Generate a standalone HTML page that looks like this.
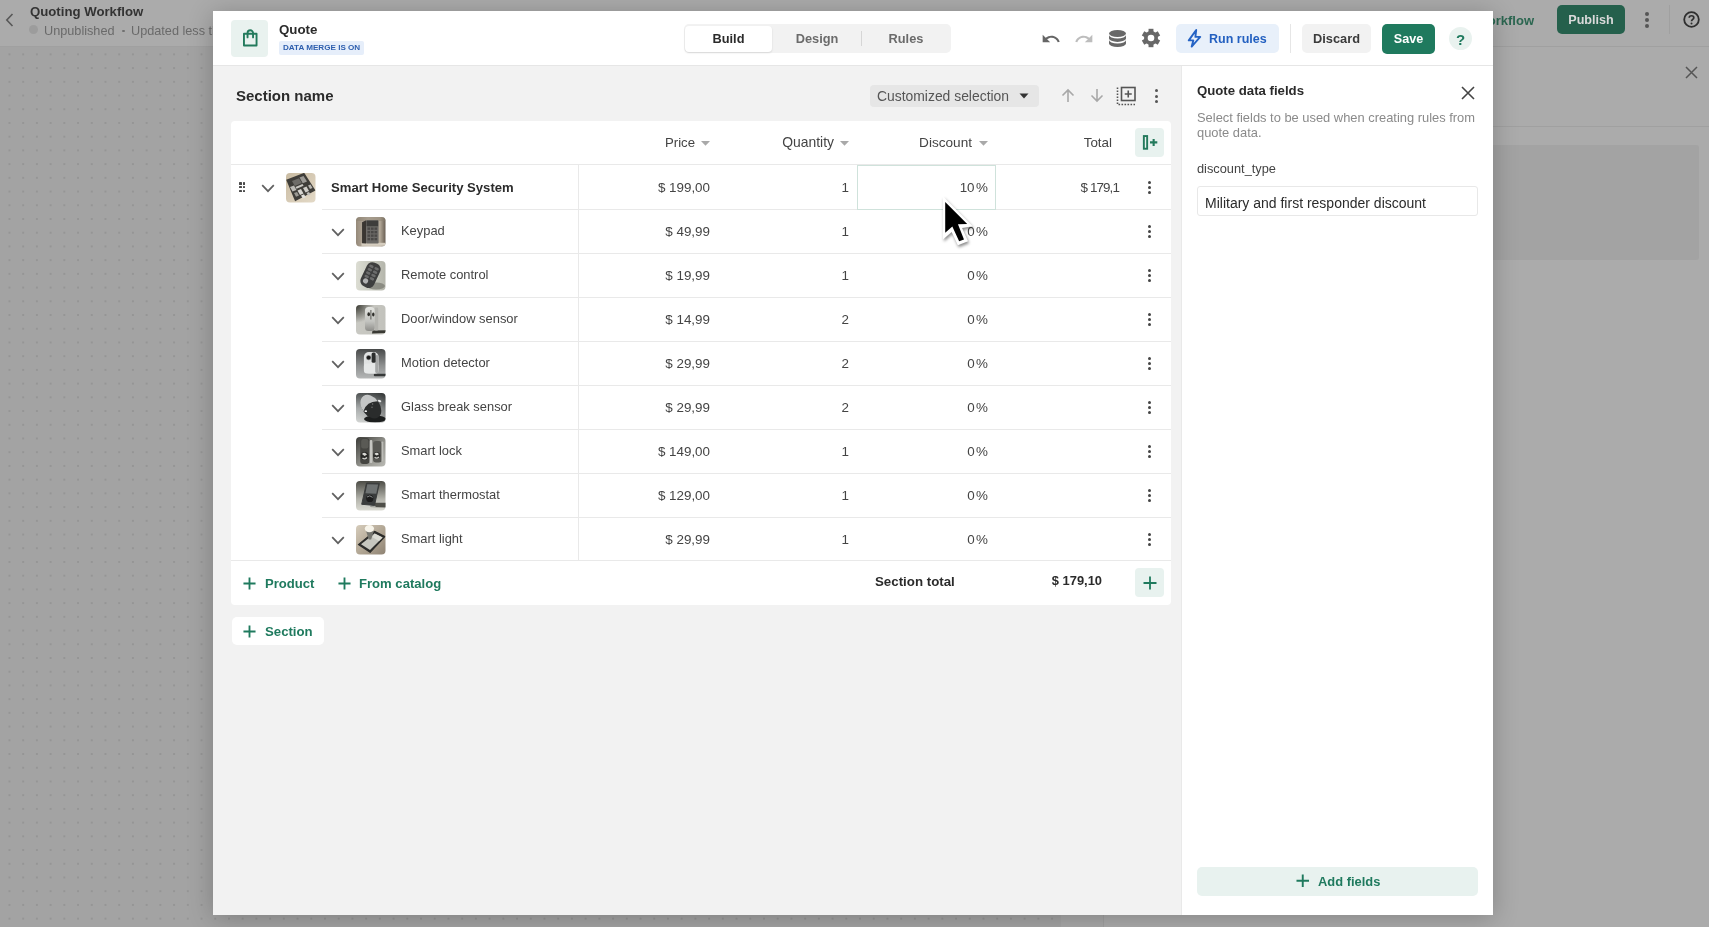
<!DOCTYPE html>
<html><head><meta charset="utf-8">
<style>
*{box-sizing:border-box;margin:0;padding:0}
html,body{width:1709px;height:927px;overflow:hidden}
body{position:relative;font-family:"Liberation Sans",sans-serif;background:#a3a3a3;color:#2b2b2b}
.a{position:absolute}
.t{position:absolute;white-space:nowrap;line-height:1;will-change:transform}
.b{font-weight:700}
/* background app */
#bghead{left:0;top:0;width:1709px;height:47px;background:#ababab;border-bottom:1px solid #a0a0a0}
#canvas{left:0;top:47px;width:1061px;height:880px;background-color:#a3a3a3;
 background-image:radial-gradient(circle at center,#959595 0.8px,rgba(0,0,0,0) 1.2px);
 background-size:13.72px 13.72px;background-position:2.6px 0.5px}
#strip{left:1061px;top:47px;width:43px;height:880px;background:#a8a8a8;border-right:1px solid #a0a0a0}
#rpanel{left:1104px;top:47px;width:605px;height:880px;background:#ababab}
/* modal */
#modal{left:213px;top:11px;width:1280px;height:904px;background:#f2f2f2;box-shadow:0 3px 24px rgba(0,0,0,0.23)}
#mhead{left:0;top:0;width:1280px;height:55px;background:#fff;border-bottom:1px solid #e6e6e6}
.green{color:#1f7a5e}
</style></head><body>
<div id="bghead" class="a"></div>
<div id="canvas" class="a"></div>
<div id="strip" class="a"></div>
<div id="rpanel" class="a"></div>

<!-- background header content -->
<svg class="a" style="left:4px;top:12px" width="12" height="16" viewBox="0 0 12 16"><path d="M8.5 2 L2.8 8 L8.5 14" fill="none" stroke="#585858" stroke-width="1.6"/></svg>
<div class="t b" style="left:30px;top:5px;font-size:13.2px;color:#333">Quoting Workflow</div>
<div class="a" style="left:29px;top:25px;width:9px;height:9px;border-radius:50%;background:#9c9c9c"></div>
<div class="t" style="left:44px;top:24.5px;font-size:12.7px;color:#6a6a6a">Unpublished</div>
<div class="a" style="left:122px;top:29.5px;width:2.8px;height:2.8px;border-radius:50%;background:#707070"></div>
<div class="t" style="left:131px;top:24.5px;font-size:12.7px;color:#6a6a6a">Updated less than a minute ago</div>


<!-- background right header -->
<div class="t b" style="left:1450px;top:13.8px;font-size:13px;color:#2b6650;width:84px;text-align:right">Workflow</div>
<div class="a" style="left:1557px;top:5px;width:68px;height:29px;border-radius:5px;background:#25604c"></div>
<div class="t b" style="left:1557px;top:14.4px;width:68px;text-align:center;font-size:12.6px;color:#dadada">Publish</div>
<div class="a" style="left:1645px;top:12px;width:4px;height:4px;border-radius:50%;background:#555"></div>
<div class="a" style="left:1645px;top:18px;width:4px;height:4px;border-radius:50%;background:#555"></div>
<div class="a" style="left:1645px;top:24px;width:4px;height:4px;border-radius:50%;background:#555"></div>
<div class="a" style="left:1669px;top:5px;width:1px;height:29px;background:#a0a0a0"></div>
<svg class="a" style="left:1683px;top:11px" width="17" height="17" viewBox="0 0 17 17"><circle cx="8.5" cy="8.5" r="7.3" fill="none" stroke="#2e2e2e" stroke-width="1.8"/><path d="M6.2 6.7 C6.2 4.1 10.8 4.1 10.8 6.7 C10.8 8.3 8.5 8.4 8.5 10.2" fill="none" stroke="#2e2e2e" stroke-width="1.7"/><circle cx="8.5" cy="12.6" r="1" fill="#2e2e2e"/></svg>
<!-- right panel behind -->
<svg class="a" style="left:1685px;top:66px" width="13" height="13" viewBox="0 0 13 13"><path d="M1 1 L12 12 M12 1 L1 12" stroke="#555" stroke-width="1.5"/></svg>
<div class="a" style="left:1104px;top:126px;width:605px;height:1px;background:#a0a0a0"></div>
<div class="a" style="left:1120px;top:145px;width:579px;height:115px;border-radius:3px;background:#a3a3a3"></div>

<div id="modal" class="a">
<div id="mhead" class="a"></div>
<!-- modal header content; coords relative to modal (left 213, top 11) -->
<div class="a" style="left:18px;top:9px;width:37px;height:37px;border-radius:4px;background:#e9f2ef"></div>
<svg class="a" style="left:27px;top:15px" width="20" height="24" viewBox="0 0 20 24"><path d="M3.95 7.75 H16.55 V19.55 H3.95 Z" fill="none" stroke="#237a5c" stroke-width="1.9" stroke-linejoin="round"/><path d="M7.55 11.4 V7 A2.75 2.75 0 0 1 13.05 7 V11.4" fill="none" stroke="#237a5c" stroke-width="1.9" stroke-linecap="round"/></svg>
<div class="t b" style="left:66px;top:12px;font-size:13.3px;color:#2b2b2b">Quote</div>
<div class="a" style="left:66px;top:30px;width:85px;height:14px;border-radius:2px;background:#e6eefa"></div>
<div class="t b" style="left:69.5px;top:33px;font-size:8.1px;color:#2d5eae">DATA MERGE IS ON</div>
<!-- tabs -->
<div class="a" style="left:471px;top:13px;width:267px;height:29px;border-radius:5px;background:#f2f2f2"></div>
<div class="a" style="left:472px;top:15px;width:87px;height:26px;border-radius:4px;background:#fff;box-shadow:0 1px 2px rgba(0,0,0,0.12)"></div>
<div class="t b" style="left:472px;top:22px;width:87px;text-align:center;font-size:12.8px;color:#2b2b2b">Build</div>
<div class="t b" style="left:560px;top:22px;width:88px;text-align:center;font-size:12.8px;color:#6b6b6b">Design</div>
<div class="a" style="left:648px;top:20px;width:1px;height:15px;background:#d6d6d6"></div>
<div class="t b" style="left:649px;top:22px;width:88px;text-align:center;font-size:12.8px;color:#6b6b6b">Rules</div>
<!-- icons -->
<svg class="a" style="left:828.3px;top:18.2px" width="20" height="20" viewBox="0 0 24 24"><path fill="#666" d="M12.5 8c-2.65 0-5.05.99-6.9 2.6L2 7v9h9l-3.62-3.62c1.39-1.16 3.16-1.88 5.12-1.88 3.54 0 6.55 2.31 7.6 5.5l2.37-.78C21.08 11.03 17.15 8 12.5 8z"/></svg>
<svg class="a" style="left:861.3px;top:18.2px" width="20" height="20" viewBox="0 0 24 24"><g transform="translate(24 0) scale(-1 1)"><path fill="#bdbdbd" d="M12.5 8c-2.65 0-5.05.99-6.9 2.6L2 7v9h9l-3.62-3.62c1.39-1.16 3.16-1.88 5.12-1.88 3.54 0 6.55 2.31 7.6 5.5l2.37-.78C21.08 11.03 17.15 8 12.5 8z"/></g></svg>
<svg class="a" style="left:895.8px;top:18.7px" width="17" height="18" viewBox="0 0 17 18"><ellipse cx="8.5" cy="3.5" rx="8.5" ry="3.5" fill="#686868"/><path d="M0 5.1 A8.5 3.5 0 0 0 17 5.1 V8.4 A8.5 3.5 0 0 1 0 8.4 Z" fill="#686868"/><path d="M0 10.0 A8.5 3.5 0 0 0 17 10.0 V13.5 A8.5 3.5 0 0 1 0 13.5 Z" fill="#686868"/></svg>
<svg class="a" style="left:927.9px;top:17.4px" width="20" height="20" viewBox="0 0 20 20"><rect x="7.55" y="0.8000000000000007" width="4.9" height="4" transform="rotate(0 10 10)" fill="#686868"/><rect x="7.55" y="0.8000000000000007" width="4.9" height="4" transform="rotate(60 10 10)" fill="#686868"/><rect x="7.55" y="0.8000000000000007" width="4.9" height="4" transform="rotate(120 10 10)" fill="#686868"/><rect x="7.55" y="0.8000000000000007" width="4.9" height="4" transform="rotate(180 10 10)" fill="#686868"/><rect x="7.55" y="0.8000000000000007" width="4.9" height="4" transform="rotate(240 10 10)" fill="#686868"/><rect x="7.55" y="0.8000000000000007" width="4.9" height="4" transform="rotate(300 10 10)" fill="#686868"/><circle cx="10" cy="10" r="7.0" fill="#686868"/><circle cx="10" cy="10" r="3.3" fill="#fff"/></svg>
<div class="a" style="left:963px;top:13px;width:103px;height:29px;border-radius:5px;background:#e8f0fa"></div>
<svg class="a" style="left:972px;top:15px" width="20" height="25" viewBox="0 0 20 25"><path d="M11.2 4 L3.8 14.4 L8.3 14.4 L6.7 20.6 L15.2 10.9 L10.4 10.9 Z" fill="none" stroke="#2563c4" stroke-width="1.9" stroke-linejoin="round"/></svg>
<div class="t b" style="left:996px;top:22px;font-size:12.5px;color:#2360c0">Run rules</div>
<div class="a" style="left:1077px;top:13px;width:1px;height:29px;background:#e6e6e6"></div>
<div class="a" style="left:1089px;top:13px;width:69px;height:29px;border-radius:5px;background:#f2f2f2"></div>
<div class="t b" style="left:1089px;top:22px;width:69px;text-align:center;font-size:12.8px;color:#3b3b3b">Discard</div>
<div class="a" style="left:1169px;top:12.5px;width:53px;height:30px;border-radius:5px;background:#1f7a5e"></div>
<div class="t b" style="left:1169px;top:22px;width:53px;text-align:center;font-size:12.6px;color:#fff">Save</div>
<div class="a" style="left:1236px;top:16px;width:23px;height:23px;border-radius:50%;background:#e9f2ef"></div>
<div class="t b" style="left:1236px;top:21px;width:23px;text-align:center;font-size:15px;color:#1f7a5e">?</div>
<!-- body: right panel -->
<div class="a" style="left:968px;top:55px;width:312px;height:849px;background:#fff;border-left:1px solid #e9e9e9"></div>
</div>

<!-- BODY START -->
<div class="t b" style="left:235.5px;top:88.2px;font-size:15px;color:#2b2b2b">Section name</div>
<div class="a" style="left:870px;top:85px;width:169px;height:21.5px;border-radius:4px;background:#e6e6e6"></div>
<div class="t" style="left:877px;top:90.23px;font-size:13.9px;color:#555">Customized selection</div>
<svg class="a" style="left:1019px;top:93px" width="10" height="6" viewBox="0 0 10 6"><path d="M0.5 0.5 H9.5 L5 5.5 Z" fill="#333"/></svg>
<svg class="a" style="left:1061px;top:88px" width="14" height="15" viewBox="0 0 14 15"><path d="M7 14 V2.5 M1.5 7.5 L7 2 L12.5 7.5" fill="none" stroke="#a8a8a8" stroke-width="1.6"/></svg>
<svg class="a" style="left:1090px;top:88px" width="14" height="15" viewBox="0 0 14 15"><path d="M7 1 V12.5 M1.5 7.5 L7 13 L12.5 7.5" fill="none" stroke="#a8a8a8" stroke-width="1.6"/></svg>
<svg class="a" style="left:1116px;top:86px" width="21" height="20" viewBox="0 0 21 20"><rect x="5.5" y="1.5" width="13.5" height="13" fill="none" stroke="#555" stroke-width="1.6"/><path d="M12.25 4.5 V11.5 M8.75 8 H15.75" stroke="#555" stroke-width="1.6"/><path d="M1.5 1.5 V18.5 H19" fill="none" stroke="#555" stroke-width="1.6" stroke-dasharray="1.6 1.4"/></svg>
<div class="a" style="left:1154.8px;top:89px;width:3.2px;height:3.2px;border-radius:50%;background:#555"></div>
<div class="a" style="left:1154.8px;top:94.5px;width:3.2px;height:3.2px;border-radius:50%;background:#555"></div>
<div class="a" style="left:1154.8px;top:100px;width:3.2px;height:3.2px;border-radius:50%;background:#555"></div>
<div class="a" style="left:231px;top:121px;width:940px;height:484px;border-radius:4px;background:#fff"></div>
<div class="a" style="left:231px;top:164px;width:940px;height:1px;background:#e9e9e9"></div>
<div class="a" style="left:321.5px;top:208.5px;width:849.5px;height:1px;background:#e9e9e9"></div>
<div class="a" style="left:321.5px;top:252.5px;width:849.5px;height:1px;background:#e9e9e9"></div>
<div class="a" style="left:321.5px;top:296.5px;width:849.5px;height:1px;background:#e9e9e9"></div>
<div class="a" style="left:321.5px;top:340.5px;width:849.5px;height:1px;background:#e9e9e9"></div>
<div class="a" style="left:321.5px;top:384.5px;width:849.5px;height:1px;background:#e9e9e9"></div>
<div class="a" style="left:321.5px;top:428.5px;width:849.5px;height:1px;background:#e9e9e9"></div>
<div class="a" style="left:321.5px;top:472.5px;width:849.5px;height:1px;background:#e9e9e9"></div>
<div class="a" style="left:321.5px;top:516.5px;width:849.5px;height:1px;background:#e9e9e9"></div>
<div class="a" style="left:231px;top:560px;width:940px;height:1px;background:#e9e9e9"></div>
<div class="a" style="left:578px;top:165px;width:1px;height:395px;background:#e9e9e9"></div>
<div class="t" style="left:394.5px;top:136.33px;width:300px;text-align:right;font-size:13.2px;color:#444;">Price</div>
<svg class="a" style="left:701px;top:141px" width="9" height="5" viewBox="0 0 9 5"><path d="M0 0 H9 L4.5 4.8 Z" fill="#a9a9a9"/></svg>
<div class="t" style="left:533.5px;top:135.73px;width:300px;text-align:right;font-size:13.9px;color:#444;">Quantity</div>
<svg class="a" style="left:840px;top:141px" width="9" height="5" viewBox="0 0 9 5"><path d="M0 0 H9 L4.5 4.8 Z" fill="#a9a9a9"/></svg>
<div class="t" style="left:672px;top:135.99px;width:300px;text-align:right;font-size:13.6px;color:#444;">Discount</div>
<svg class="a" style="left:979px;top:141px" width="9" height="5" viewBox="0 0 9 5"><path d="M0 0 H9 L4.5 4.8 Z" fill="#a9a9a9"/></svg>
<div class="t" style="left:811.5px;top:136.16px;width:300px;text-align:right;font-size:13.4px;color:#444;">Total</div>
<div class="a" style="left:1135px;top:128px;width:29px;height:29px;border-radius:4px;background:#e8f2ef"></div>
<svg class="a" style="left:1140px;top:134px" width="19" height="17" viewBox="0 0 19 17"><rect x="3.85" y="2.05" width="3.3" height="12.7" fill="none" stroke="#237a5c" stroke-width="1.9"/><path d="M10 8.4 H17.3 M13.65 4.9 V11.9" stroke="#237a5c" stroke-width="2.1"/></svg>
<div class="a" style="left:239.3px;top:182.3px;width:2.3px;height:2.3px;border-radius:0.6px;background:#4a4a4a"></div>
<div class="a" style="left:239.3px;top:185.9px;width:2.3px;height:2.3px;border-radius:0.6px;background:#4a4a4a"></div>
<div class="a" style="left:239.3px;top:189.7px;width:2.3px;height:2.3px;border-radius:0.6px;background:#4a4a4a"></div>
<div class="a" style="left:243.0px;top:182.3px;width:2.3px;height:2.3px;border-radius:0.6px;background:#4a4a4a"></div>
<div class="a" style="left:243.0px;top:185.9px;width:2.3px;height:2.3px;border-radius:0.6px;background:#4a4a4a"></div>
<div class="a" style="left:243.0px;top:189.7px;width:2.3px;height:2.3px;border-radius:0.6px;background:#4a4a4a"></div>
<div class="t b" style="left:331px;top:180.91px;font-size:13.1px;color:#2b2b2b">Smart Home Security System</div>
<svg class="a" style="left:261px;top:183.5px" width="14" height="9" viewBox="0 0 14 9"><path d="M1.2 1.2 L7 7.2 L12.8 1.2" fill="none" stroke="#606060" stroke-width="1.7"/></svg>
<div class="a" style="left:286px;top:172.5px;width:30px;height:30px;filter:blur(0.4px)"><svg width="30" height="30" viewBox="0 0 30 30" style="display:block"><defs><clipPath id="cp_0"><rect x="0" y="0" width="29.5" height="29.5" rx="4"/></clipPath><linearGradient id="g_0" x1="0" y1="0" x2="1" y2="1"><stop offset="0" stop-color="#c9bba2"/><stop offset="1" stop-color="#e4dac8"/></linearGradient></defs><g clip-path="url(#cp_0)"><rect width="30" height="30" fill="url(#g_0)"/>
<path d="M0.2 6.8 L18.2 -0.2 L29.5 17.4 L9.1 28.3 Z" fill="#3f3d39"/>
<path d="M6 8 L13 5.2 L15.8 10 L8.8 13 Z" fill="#6e6c68"/>
<path d="M13.5 4.6 L17.5 3 L21 8.6 L16.8 10.2 Z" fill="#9c9a96"/>
<path d="M9.5 14 L16.5 11 L17.6 12.8 L10.6 15.8 Z" fill="#c9c7c2"/>
<path d="M4 14 L8 12.5 L10.5 17 L6.5 18.5 Z" fill="#bdbbb6"/>
<path d="M11.5 17.5 L15 16 L17.5 20.5 L14 22 Z" fill="#d8d6d1"/>
<path d="M17 15 L20.5 13.5 L23 18 L19.5 19.5 Z" fill="#cfcdc8"/>
<path d="M22 12.5 L24.5 11.5 L26.5 15 L24 16 Z" fill="#b8b6b1"/>
<path d="M8 20 L11 19 L13 22.5 L10 23.8 Z" fill="#9a9893"/>
<path d="M15 22.5 L18 21.2 L19.8 24.2 L16.8 25.5 Z" fill="#e2e0db"/>
<path d="M20.5 20 L23 19 L24.5 21.5 L22 22.6 Z" fill="#c2c0bb"/></g></svg></div>
<div class="t" style="left:410px;top:180.66px;width:300px;text-align:right;font-size:13.4px;color:#444;">$ 199,00</div>
<div class="t" style="left:549px;top:180.66px;width:300px;text-align:right;font-size:13.4px;color:#444;">1</div>
<div class="t" style="left:688px;top:180.66px;width:300px;text-align:right;font-size:13.4px;color:#444;">10<span style="margin-left:1.5px">%</span></div>
<div class="t" style="left:818.5px;top:180.66px;width:300px;text-align:right;font-size:13.4px;color:#444;letter-spacing:-0.9px">$ 179,1</div>
<div class="a" style="left:1147.7px;top:180.5px;width:3.2px;height:3.2px;border-radius:50%;background:#444"></div>
<div class="a" style="left:1147.7px;top:185.5px;width:3.2px;height:3.2px;border-radius:50%;background:#444"></div>
<div class="a" style="left:1147.7px;top:190.5px;width:3.2px;height:3.2px;border-radius:50%;background:#444"></div>
<div class="t" style="left:400.5px;top:225.08px;font-size:12.9px;color:#444">Keypad</div>
<svg class="a" style="left:331px;top:227.5px" width="14" height="9" viewBox="0 0 14 9"><path d="M1.2 1.2 L7 7.2 L12.8 1.2" fill="none" stroke="#606060" stroke-width="1.7"/></svg>
<div class="a" style="left:356px;top:216.5px;width:30px;height:30px;filter:blur(0.4px)"><svg width="30" height="30" viewBox="0 0 30 30" style="display:block"><defs><clipPath id="cp_1"><rect x="0" y="0" width="29.5" height="29.5" rx="4"/></clipPath><linearGradient id="g_1" x1="0" y1="0" x2="1" y2="0"><stop offset="0" stop-color="#958979"/><stop offset="0.4" stop-color="#c4baac"/><stop offset="0.8" stop-color="#b3a898"/><stop offset="1" stop-color="#62584d"/></linearGradient></defs><g clip-path="url(#cp_1)"><rect width="30" height="30" fill="url(#g_1)"/>
<rect x="0" y="0" width="30" height="4" fill="#8a7f70" opacity="0.5"/>
<rect x="5.5" y="25.8" width="25" height="3" fill="#d5cdbf"/>
<path d="M6.05 5.3 L10.1 3.3 L10.1 26.6 L6.05 26.2 Z" fill="#3a3632"/>
<rect x="10.1" y="3.3" width="12.5" height="23.3" rx="0.8" fill="#6a6865"/>
<rect x="10.6" y="3.6" width="11.5" height="5.6" fill="#3e3d3b"/>
<g fill="#4a4846">
<rect x="11.5" y="10.5" width="2.6" height="2.3"/><rect x="15" y="10.5" width="2.6" height="2.3"/><rect x="18.5" y="10.5" width="2.6" height="2.3"/>
<rect x="11.5" y="14" width="2.6" height="2.3"/><rect x="15" y="14" width="2.6" height="2.3"/><rect x="18.5" y="14" width="2.6" height="2.3"/>
<rect x="11.5" y="17.5" width="2.6" height="2.3"/><rect x="15" y="17.5" width="2.6" height="2.3"/><rect x="18.5" y="17.5" width="2.6" height="2.3"/>
<rect x="11.5" y="21" width="2.6" height="2.3"/><rect x="15" y="21" width="2.6" height="2.3"/><rect x="18.5" y="21" width="2.6" height="2.3"/></g></g></svg></div>
<div class="t" style="left:410px;top:224.66px;width:300px;text-align:right;font-size:13.4px;color:#444;">$ 49,99</div>
<div class="t" style="left:549px;top:224.66px;width:300px;text-align:right;font-size:13.4px;color:#444;">1</div>
<div class="t" style="left:688px;top:224.66px;width:300px;text-align:right;font-size:13.4px;color:#444;">0<span style="margin-left:1.5px">%</span></div>
<div class="a" style="left:1147.7px;top:224.5px;width:3.2px;height:3.2px;border-radius:50%;background:#444"></div>
<div class="a" style="left:1147.7px;top:229.5px;width:3.2px;height:3.2px;border-radius:50%;background:#444"></div>
<div class="a" style="left:1147.7px;top:234.5px;width:3.2px;height:3.2px;border-radius:50%;background:#444"></div>
<div class="t" style="left:400.5px;top:269.08px;font-size:12.9px;color:#444">Remote control</div>
<svg class="a" style="left:331px;top:271.5px" width="14" height="9" viewBox="0 0 14 9"><path d="M1.2 1.2 L7 7.2 L12.8 1.2" fill="none" stroke="#606060" stroke-width="1.7"/></svg>
<div class="a" style="left:356px;top:260.5px;width:30px;height:30px;filter:blur(0.4px)"><svg width="30" height="30" viewBox="0 0 30 30" style="display:block"><defs><clipPath id="cp_2"><rect x="0" y="0" width="29.5" height="29.5" rx="4"/></clipPath><linearGradient id="g_2" x1="0" y1="0" x2="1" y2="0"><stop offset="0" stop-color="#dcddd3"/><stop offset="1" stop-color="#b4b5ab"/></linearGradient></defs><g clip-path="url(#cp_2)"><rect width="30" height="30" fill="url(#g_2)"/>
<ellipse cx="20" cy="25" rx="9" ry="3.5" fill="#6c6c64" opacity="0.6"/>
<g transform="rotate(25 14.5 14.1)"><rect x="7.2" y="1.1" width="14.6" height="26" rx="6" fill="#3e3e3e"/>
<g fill="#6c6c6c"><rect x="9.3" y="4.5" width="4.6" height="2.6" rx="1.3"/><rect x="15.1" y="4.5" width="4.6" height="2.6" rx="1.3"/>
<rect x="9.3" y="8.2" width="4.6" height="2.6" rx="1.3"/><rect x="15.1" y="8.2" width="4.6" height="2.6" rx="1.3"/>
<rect x="9.3" y="11.9" width="4.6" height="2.6" rx="1.3"/><rect x="15.1" y="11.9" width="4.6" height="2.6" rx="1.3"/>
<rect x="9.3" y="15.6" width="4.6" height="2.6" rx="1.3"/><rect x="15.1" y="15.6" width="4.6" height="2.6" rx="1.3"/></g>
<circle cx="12.5" cy="21.5" r="2.6" fill="#b0b0b0"/></g></g></svg></div>
<div class="t" style="left:410px;top:268.66px;width:300px;text-align:right;font-size:13.4px;color:#444;">$ 19,99</div>
<div class="t" style="left:549px;top:268.66px;width:300px;text-align:right;font-size:13.4px;color:#444;">1</div>
<div class="t" style="left:688px;top:268.66px;width:300px;text-align:right;font-size:13.4px;color:#444;">0<span style="margin-left:1.5px">%</span></div>
<div class="a" style="left:1147.7px;top:268.5px;width:3.2px;height:3.2px;border-radius:50%;background:#444"></div>
<div class="a" style="left:1147.7px;top:273.5px;width:3.2px;height:3.2px;border-radius:50%;background:#444"></div>
<div class="a" style="left:1147.7px;top:278.5px;width:3.2px;height:3.2px;border-radius:50%;background:#444"></div>
<div class="t" style="left:400.5px;top:313.08px;font-size:12.9px;color:#444">Door/window sensor</div>
<svg class="a" style="left:331px;top:315.5px" width="14" height="9" viewBox="0 0 14 9"><path d="M1.2 1.2 L7 7.2 L12.8 1.2" fill="none" stroke="#606060" stroke-width="1.7"/></svg>
<div class="a" style="left:356px;top:304.5px;width:30px;height:30px;filter:blur(0.4px)"><svg width="30" height="30" viewBox="0 0 30 30" style="display:block"><defs><clipPath id="cp_3"><rect x="0" y="0" width="29.5" height="29.5" rx="4"/></clipPath><linearGradient id="g_3" x1="0" y1="0" x2="1" y2="0"><stop offset="0" stop-color="#c9c9c3"/><stop offset="1" stop-color="#c2c2bc"/></linearGradient><radialGradient id="g2_3" cx="0" cy="0" r="0.6"><stop offset="0" stop-color="#36362f"/><stop offset="1" stop-color="#36362f" stop-opacity="0"/></radialGradient><linearGradient id="g3_3" x1="0" y1="0" x2="0" y2="1"><stop offset="0" stop-color="#e4e5e1"/><stop offset="0.6" stop-color="#c2c3bf"/><stop offset="1" stop-color="#8e8e8a"/></linearGradient></defs><g clip-path="url(#cp_3)"><rect width="30" height="30" fill="url(#g_3)"/>
<rect width="30" height="30" fill="url(#g2_3)"/>
<path d="M16.5 25.5 L30 25.2 L30 28 L16 28.5 Z" fill="#3a3a34"/>
<rect x="18.6" y="2.5" width="3.6" height="23" rx="1.2" fill="#b4b4af"/>
<rect x="9" y="2" width="9.6" height="24" rx="3.5" fill="url(#g3_3)"/>
<path d="M14.9 5 V14.5" stroke="#4a4a46" stroke-width="0.9"/>
<ellipse cx="12.7" cy="9.2" rx="1.3" ry="2" fill="#2e2e2a"/><ellipse cx="17.3" cy="9.4" rx="1.2" ry="2" fill="#2e2e2a"/></g></svg></div>
<div class="t" style="left:410px;top:312.66px;width:300px;text-align:right;font-size:13.4px;color:#444;">$ 14,99</div>
<div class="t" style="left:549px;top:312.66px;width:300px;text-align:right;font-size:13.4px;color:#444;">2</div>
<div class="t" style="left:688px;top:312.66px;width:300px;text-align:right;font-size:13.4px;color:#444;">0<span style="margin-left:1.5px">%</span></div>
<div class="a" style="left:1147.7px;top:312.5px;width:3.2px;height:3.2px;border-radius:50%;background:#444"></div>
<div class="a" style="left:1147.7px;top:317.5px;width:3.2px;height:3.2px;border-radius:50%;background:#444"></div>
<div class="a" style="left:1147.7px;top:322.5px;width:3.2px;height:3.2px;border-radius:50%;background:#444"></div>
<div class="t" style="left:400.5px;top:357.08px;font-size:12.9px;color:#444">Motion detector</div>
<svg class="a" style="left:331px;top:359.5px" width="14" height="9" viewBox="0 0 14 9"><path d="M1.2 1.2 L7 7.2 L12.8 1.2" fill="none" stroke="#606060" stroke-width="1.7"/></svg>
<div class="a" style="left:356px;top:348.5px;width:30px;height:30px;filter:blur(0.4px)"><svg width="30" height="30" viewBox="0 0 30 30" style="display:block"><defs><clipPath id="cp_4"><rect x="0" y="0" width="29.5" height="29.5" rx="4"/></clipPath><linearGradient id="g_4" x1="0" y1="0" x2="0" y2="1"><stop offset="0" stop-color="#474949"/><stop offset="0.55" stop-color="#8e9090"/><stop offset="1" stop-color="#b6b8b8"/></linearGradient></defs><g clip-path="url(#cp_4)"><rect width="30" height="30" fill="url(#g_4)"/>
<rect x="17.8" y="24.8" width="13" height="2.4" rx="1" fill="#363838"/>
<rect x="7.9" y="3.1" width="14.7" height="21.3" rx="5" fill="#e0e2e2"/>
<rect x="7.9" y="14.5" width="14.7" height="9.9" rx="3" fill="#e6e8e8"/>
<rect x="19.2" y="6" width="3.4" height="18" rx="1.5" fill="#a6a8a8"/>
<rect x="15.6" y="3.5" width="4" height="10.3" rx="1.5" fill="#2c2e2e"/>
<circle cx="12.65" cy="8.6" r="2.6" fill="#8a8c8c"/><circle cx="12.65" cy="8.6" r="1.9" fill="#1a1a1a"/></g></svg></div>
<div class="t" style="left:410px;top:356.66px;width:300px;text-align:right;font-size:13.4px;color:#444;">$ 29,99</div>
<div class="t" style="left:549px;top:356.66px;width:300px;text-align:right;font-size:13.4px;color:#444;">2</div>
<div class="t" style="left:688px;top:356.66px;width:300px;text-align:right;font-size:13.4px;color:#444;">0<span style="margin-left:1.5px">%</span></div>
<div class="a" style="left:1147.7px;top:356.5px;width:3.2px;height:3.2px;border-radius:50%;background:#444"></div>
<div class="a" style="left:1147.7px;top:361.5px;width:3.2px;height:3.2px;border-radius:50%;background:#444"></div>
<div class="a" style="left:1147.7px;top:366.5px;width:3.2px;height:3.2px;border-radius:50%;background:#444"></div>
<div class="t" style="left:400.5px;top:401.08px;font-size:12.9px;color:#444">Glass break sensor</div>
<svg class="a" style="left:331px;top:403.5px" width="14" height="9" viewBox="0 0 14 9"><path d="M1.2 1.2 L7 7.2 L12.8 1.2" fill="none" stroke="#606060" stroke-width="1.7"/></svg>
<div class="a" style="left:356px;top:392.5px;width:30px;height:30px;filter:blur(0.4px)"><svg width="30" height="30" viewBox="0 0 30 30" style="display:block"><defs><clipPath id="cp_5"><rect x="0" y="0" width="29.5" height="29.5" rx="4"/></clipPath><linearGradient id="g_5" x1="0" y1="0" x2="0" y2="1"><stop offset="0" stop-color="#3a3e3e"/><stop offset="0.5" stop-color="#9ea2a2"/><stop offset="1" stop-color="#d2d4d2"/></linearGradient><linearGradient id="g2_5" x1="0" y1="0" x2="1" y2="0"><stop offset="0" stop-color="#fff" stop-opacity="0.1"/><stop offset="1" stop-color="#000" stop-opacity="0.25"/></linearGradient></defs><g clip-path="url(#cp_5)"><rect width="30" height="30" fill="url(#g_5)"/>
<rect width="30" height="30" fill="url(#g2_5)"/>
<ellipse cx="19" cy="26" rx="11" ry="3.5" fill="#1c1e1e"/>
<g transform="rotate(-35 15.2 14.1)"><ellipse cx="15.2" cy="14.1" rx="8.8" ry="12.4" fill="#2a2c2c"/>
<path d="M6.4 13 A8.8 12.4 0 0 1 24 13 Q15 6.5 6.4 13 Z" fill="#c4c6c6"/></g>
<ellipse cx="9.8" cy="18.2" rx="1.3" ry="0.9" fill="#f0f0f0"/>
<ellipse cx="23.6" cy="8" rx="1.8" ry="1" fill="#e8e8e8" transform="rotate(20 23.6 8)"/>
<circle cx="16.6" cy="11" r="0.7" fill="#777"/><circle cx="16" cy="14.3" r="0.7" fill="#777"/></g></svg></div>
<div class="t" style="left:410px;top:400.66px;width:300px;text-align:right;font-size:13.4px;color:#444;">$ 29,99</div>
<div class="t" style="left:549px;top:400.66px;width:300px;text-align:right;font-size:13.4px;color:#444;">2</div>
<div class="t" style="left:688px;top:400.66px;width:300px;text-align:right;font-size:13.4px;color:#444;">0<span style="margin-left:1.5px">%</span></div>
<div class="a" style="left:1147.7px;top:400.5px;width:3.2px;height:3.2px;border-radius:50%;background:#444"></div>
<div class="a" style="left:1147.7px;top:405.5px;width:3.2px;height:3.2px;border-radius:50%;background:#444"></div>
<div class="a" style="left:1147.7px;top:410.5px;width:3.2px;height:3.2px;border-radius:50%;background:#444"></div>
<div class="t" style="left:400.5px;top:445.08px;font-size:12.9px;color:#444">Smart lock</div>
<svg class="a" style="left:331px;top:447.5px" width="14" height="9" viewBox="0 0 14 9"><path d="M1.2 1.2 L7 7.2 L12.8 1.2" fill="none" stroke="#606060" stroke-width="1.7"/></svg>
<div class="a" style="left:356px;top:436.5px;width:30px;height:30px;filter:blur(0.4px)"><svg width="30" height="30" viewBox="0 0 30 30" style="display:block"><defs><clipPath id="cp_6"><rect x="0" y="0" width="29.5" height="29.5" rx="4"/></clipPath><linearGradient id="g_6" x1="0" y1="0" x2="1" y2="1"><stop offset="0" stop-color="#3a3a36"/><stop offset="0.5" stop-color="#8c8c86"/><stop offset="1" stop-color="#bcbcb6"/></linearGradient></defs><g clip-path="url(#cp_6)"><rect width="30" height="30" fill="url(#g_6)"/>
<rect x="4.2" y="0.9" width="9.2" height="26.1" rx="3" fill="#454541"/>
<rect x="5.2" y="2" width="7.2" height="9.5" rx="2" fill="#5a5a55"/>
<circle cx="8.6" cy="18.9" r="4" fill="#2a2a28"/><path d="M6 17 Q8.6 14.5 11 17.5 L8.6 19 Z" fill="#d8d8d4"/><path d="M6.5 21 Q8.6 23 11 20.5" stroke="#cfcfcb" stroke-width="1.3" fill="none"/>
<rect x="13.8" y="3.1" width="2.5" height="22.8" rx="1" fill="#c6c6c2"/>
<rect x="17" y="3.9" width="8.9" height="21.6" rx="3" fill="#585854"/>
<circle cx="20.7" cy="18.5" r="3.6" fill="#2e2e2c"/><path d="M18.3 17 Q20.7 14.5 23 17.2 L20.7 18.6 Z" fill="#dcdcd8"/><path d="M18.6 20.3 Q20.7 22.3 22.9 20" stroke="#d0d0cc" stroke-width="1.2" fill="none"/>
<rect x="25.5" y="4.5" width="1.8" height="20" rx="0.8" fill="#bdbdb8"/></g></svg></div>
<div class="t" style="left:410px;top:444.66px;width:300px;text-align:right;font-size:13.4px;color:#444;">$ 149,00</div>
<div class="t" style="left:549px;top:444.66px;width:300px;text-align:right;font-size:13.4px;color:#444;">1</div>
<div class="t" style="left:688px;top:444.66px;width:300px;text-align:right;font-size:13.4px;color:#444;">0<span style="margin-left:1.5px">%</span></div>
<div class="a" style="left:1147.7px;top:444.5px;width:3.2px;height:3.2px;border-radius:50%;background:#444"></div>
<div class="a" style="left:1147.7px;top:449.5px;width:3.2px;height:3.2px;border-radius:50%;background:#444"></div>
<div class="a" style="left:1147.7px;top:454.5px;width:3.2px;height:3.2px;border-radius:50%;background:#444"></div>
<div class="t" style="left:400.5px;top:489.08px;font-size:12.9px;color:#444">Smart thermostat</div>
<svg class="a" style="left:331px;top:491.5px" width="14" height="9" viewBox="0 0 14 9"><path d="M1.2 1.2 L7 7.2 L12.8 1.2" fill="none" stroke="#606060" stroke-width="1.7"/></svg>
<div class="a" style="left:356px;top:480.5px;width:30px;height:30px;filter:blur(0.4px)"><svg width="30" height="30" viewBox="0 0 30 30" style="display:block"><defs><clipPath id="cp_7"><rect x="0" y="0" width="29.5" height="29.5" rx="4"/></clipPath><linearGradient id="g_7" x1="0" y1="0" x2="0" y2="1"><stop offset="0" stop-color="#4c4c46"/><stop offset="0.6" stop-color="#b4b4ac"/><stop offset="1" stop-color="#dcdcd4"/></linearGradient></defs><g clip-path="url(#cp_7)"><rect width="30" height="30" fill="url(#g_7)"/>
<path d="M17.8 21.8 L30 21.8 L30 26.6 L13.8 26 Z" fill="#4e4e48"/>
<path d="M6.8 23.3 L18.5 24.4 L20 25.8 L7.8 25.2 Z" fill="#d2d3cd"/>
<path d="M10.5 2 L23.3 2.4 L18.5 24.4 L5.7 23.3 Z" fill="#3a3c3c" stroke="#3a3c3c" stroke-width="1" stroke-linejoin="round"/>
<path d="M11.3 3.2 L22.1 3.6 L20.3 12.8 L9.4 12.2 Z" fill="#6e7272"/>
<circle cx="13.8" cy="17.4" r="3.6" fill="#1c1c1c"/><path d="M11 16 Q13.8 13.5 16.6 16.4" stroke="#8a8e8e" stroke-width="1" fill="none"/></g></svg></div>
<div class="t" style="left:410px;top:488.66px;width:300px;text-align:right;font-size:13.4px;color:#444;">$ 129,00</div>
<div class="t" style="left:549px;top:488.66px;width:300px;text-align:right;font-size:13.4px;color:#444;">1</div>
<div class="t" style="left:688px;top:488.66px;width:300px;text-align:right;font-size:13.4px;color:#444;">0<span style="margin-left:1.5px">%</span></div>
<div class="a" style="left:1147.7px;top:488.5px;width:3.2px;height:3.2px;border-radius:50%;background:#444"></div>
<div class="a" style="left:1147.7px;top:493.5px;width:3.2px;height:3.2px;border-radius:50%;background:#444"></div>
<div class="a" style="left:1147.7px;top:498.5px;width:3.2px;height:3.2px;border-radius:50%;background:#444"></div>
<div class="t" style="left:400.5px;top:533.08px;font-size:12.9px;color:#444">Smart light</div>
<svg class="a" style="left:331px;top:535.5px" width="14" height="9" viewBox="0 0 14 9"><path d="M1.2 1.2 L7 7.2 L12.8 1.2" fill="none" stroke="#606060" stroke-width="1.7"/></svg>
<div class="a" style="left:356px;top:524.5px;width:30px;height:30px;filter:blur(0.4px)"><svg width="30" height="30" viewBox="0 0 30 30" style="display:block"><defs><clipPath id="cp_8"><rect x="0" y="0" width="29.5" height="29.5" rx="4"/></clipPath><linearGradient id="g_8" x1="0" y1="0" x2="1" y2="1"><stop offset="0" stop-color="#d6ccbb"/><stop offset="0.5" stop-color="#b3a896"/><stop offset="1" stop-color="#8e8272"/></linearGradient></defs><g clip-path="url(#cp_8)"><rect width="30" height="30" fill="url(#g_8)"/>
<path d="M2.4 19.6 L18.5 6.4 L28.8 11.6 L14.1 27.3 Z" fill="#2c2c2a" stroke="#2c2c2a" stroke-width="1.2" stroke-linejoin="round"/>
<path d="M5 19.3 L18.6 8.4 L26.6 12.5 L14 25 Z" fill="#c6c6be"/>
<path d="M18.6 8.4 L26.6 12.5 L23 16 L16 12 Z" fill="#dcdcd4"/>
<path d="M10.1 6 L17.8 6 L15.2 14.5 L12.7 14.5 Z" fill="#76766f"/>
<ellipse cx="13.4" cy="3.6" rx="4.6" ry="3.6" fill="#f7f4ea"/></g></svg></div>
<div class="t" style="left:410px;top:532.66px;width:300px;text-align:right;font-size:13.4px;color:#444;">$ 29,99</div>
<div class="t" style="left:549px;top:532.66px;width:300px;text-align:right;font-size:13.4px;color:#444;">1</div>
<div class="t" style="left:688px;top:532.66px;width:300px;text-align:right;font-size:13.4px;color:#444;">0<span style="margin-left:1.5px">%</span></div>
<div class="a" style="left:1147.7px;top:532.5px;width:3.2px;height:3.2px;border-radius:50%;background:#444"></div>
<div class="a" style="left:1147.7px;top:537.5px;width:3.2px;height:3.2px;border-radius:50%;background:#444"></div>
<div class="a" style="left:1147.7px;top:542.5px;width:3.2px;height:3.2px;border-radius:50%;background:#444"></div>
<div class="a" style="left:857px;top:165px;width:139px;height:44.5px;border:1px solid #cfe2db"></div>
<svg class="a" style="left:243px;top:576.6px" width="13" height="13" viewBox="0 0 14 14"><path d="M7 0.5 V13.5 M0.5 7 H13.5" stroke="#1f7a5e" stroke-width="2"/></svg>
<div class="t b" style="left:264.5px;top:577.41px;font-size:13.1px;color:#1f7a5e">Product</div>
<svg class="a" style="left:337.5px;top:576.6px" width="13" height="13" viewBox="0 0 14 14"><path d="M7 0.5 V13.5 M0.5 7 H13.5" stroke="#1f7a5e" stroke-width="2"/></svg>
<div class="t b" style="left:358.8px;top:577.41px;font-size:13.1px;color:#1f7a5e">From catalog</div>
<div class="t b" style="left:874.5px;top:574.94px;font-size:13.3px;color:#2b2b2b">Section total</div>
<div class="t b" style="left:801.5px;top:575.28px;width:300px;text-align:right;font-size:12.9px;color:#2b2b2b;">$ 179,10</div>
<div class="a" style="left:1135px;top:568px;width:29px;height:29px;border-radius:4px;background:#e8f2ef"></div>
<svg class="a" style="left:1142.5px;top:575.5px" width="14" height="14" viewBox="0 0 14 14"><path d="M7 0.5 V13.5 M0.5 7 H13.5" stroke="#1f7a5e" stroke-width="1.8"/></svg>
<div class="a" style="left:231.5px;top:617px;width:92px;height:28px;border-radius:5px;background:#fff"></div>
<svg class="a" style="left:243px;top:624.6px" width="13" height="13" viewBox="0 0 14 14"><path d="M7 0.5 V13.5 M0.5 7 H13.5" stroke="#1f7a5e" stroke-width="2"/></svg>
<div class="t b" style="left:264.5px;top:625.33px;font-size:13.2px;color:#1f7a5e">Section</div>
<div class="t b" style="left:1197px;top:83.83px;font-size:13.2px;color:#2b2b2b">Quote data fields</div>
<svg class="a" style="left:1461px;top:86px" width="14" height="14" viewBox="0 0 14 14"><path d="M1 1 L13 13 M13 1 L1 13" stroke="#444" stroke-width="1.6"/></svg>
<div class="t" style="left:1197px;top:110.28px;font-size:12.9px;color:#8a8a8a;line-height:15px;white-space:normal;width:290px">Select fields to be used when creating rules from<br>quote data.</div>
<div class="t" style="left:1197px;top:162.66px;font-size:12.8px;color:#444">discount_type</div>
<div class="a" style="left:1197px;top:186px;width:281px;height:30px;border:1px solid #e8e8e8;border-radius:3px;background:#fff"></div>
<div class="t" style="left:1205px;top:196.35px;font-size:14px;color:#2b2b2b">Military and first responder discount</div>
<div class="a" style="left:1197px;top:866.5px;width:281px;height:29px;border-radius:5px;background:#e8f2ef"></div>
<svg class="a" style="left:1295.8px;top:874.2px" width="13.5" height="13.5" viewBox="0 0 14 14"><path d="M7 0.5 V13.5 M0.5 7 H13.5" stroke="#1f7a5e" stroke-width="2"/></svg>
<div class="t b" style="left:1317.5px;top:875.58px;font-size:12.9px;color:#1f7a5e">Add fields</div>
<svg class="a" style="left:930px;top:190px;filter:drop-shadow(1.5px 2px 1.5px rgba(0,0,0,0.45))" width="60" height="60" viewBox="0 0 927 927"><path d="M200 95 L200 765 L335 650 L430 855 L588 790 L495 588 L660 560 Z" fill="#fff"/><path d="M235 185 L235 660 L345 565 L450 790 L525 765 L432 528 L575 525 Z" fill="#000"/></svg>
<!-- BODY END -->
</body></html>
